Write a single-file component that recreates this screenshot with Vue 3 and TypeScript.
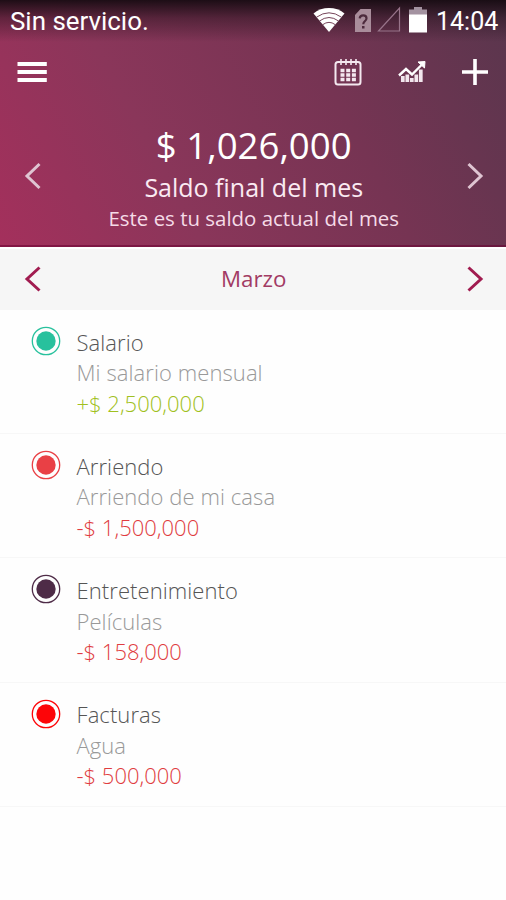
<script setup lang="ts">
interface Entry {
  name: string
  note: string
  amount: string
  income: boolean
  tone: string
}

const entries: Entry[] = [
  { name: 'Salario', note: 'Mi salario mensual', amount: '+$ 2,500,000', income: true, tone: 'teal' },
  { name: 'Arriendo', note: 'Arriendo de mi casa', amount: '-$ 1,500,000', income: false, tone: 'coral' },
  { name: 'Entretenimiento', note: 'Películas', amount: '-$ 158,000', income: false, tone: 'plum' },
  { name: 'Facturas', note: 'Agua', amount: '-$ 500,000', income: false, tone: 'red' },
]
</script>

<template>
  <div class="screen">
    <header class="header">
      <div class="status">
        <span class="carrier">Sin servicio.</span>
        <div class="status-icons">
          <svg class="wifi" width="32" height="26" viewBox="0 0 32 26">
            <path d="M0.5 6.5C9-0.7 23-0.7 31.500 6.500L16 25Z" fill="#fff" />
            <path d="M3.500 10.200Q16 1.400 28.500 10.200M6.500 14Q16 7 25.500 14M9.700 17.700Q16 13 22.300 17.700" fill="none" stroke="#76445a" stroke-width="1" />
          </svg>
          <svg class="sim" width="16" height="24" viewBox="0 0 16 24">
            <path d="M5.500 0H16V23H0V6Z" fill="#a98d9b" />
            <path d="M4.700 9.300Q5 6.300 8.200 6.300Q11.500 6.300 11.500 9.200Q11.500 11 9.700 12.400Q8.300 13.500 8.300 15.200" fill="none" stroke="#4d2b3d" stroke-width="2.200" />
            <rect x="7" y="17" width="2.500" height="2.500" fill="#4d2b3d" />
          </svg>
          <svg class="signal" width="24" height="26" viewBox="0 0 24 26">
            <path d="M22.500 2V25H1.500Z" fill="none" stroke="#98748a" stroke-width="1.200" />
          </svg>
          <svg class="battery" width="18" height="26" viewBox="0 0 18 26">
            <path d="M5 0H13V2.500H18V8H0V2.500H5Z" fill="#a392a0" />
            <path d="M0 7.500H18V25.500H0Z" fill="#fff" />
          </svg>
        </div>
        <span class="clock">14:04</span>
      </div>

      <nav class="toolbar">
        <svg class="menu" width="30" height="22" viewBox="0 0 30 22">
          <path d="M0.500 3H29.800M0.500 11H29.800M0.500 19H29.800" stroke="#fff" stroke-width="3.800" />
        </svg>
        <svg class="calendar" width="28" height="28" viewBox="0 0 28 28">
          <rect x="1.500" y="4" width="25" height="22.500" rx="2.500" fill="none" stroke="#f4e8ef" stroke-width="2" />
          <path d="M7 1V7M12 1V7M17 1V7M22 1V7" stroke="#f4e8ef" stroke-width="1.600" />
          <path d="M6.500 12.500H22M6.500 17H22M6.500 21.500H22" stroke="#f4e8ef" stroke-width="3.300" stroke-dasharray="4 1.700" />
        </svg>
        <svg class="chart" width="28" height="22" viewBox="0 0 28 22">
          <path d="M1 14.500L8 8L14 13.500L23.500 4" fill="none" stroke="#fff" stroke-width="2.400" />
          <path d="M20 1L27 0.500L26.500 7Z" fill="#fff" stroke="#fff" />
          <path d="M4.800 21V15M9.300 21V13.500M13.800 21V17M18.300 21V13.500M22.800 21V8.500" stroke="#f2e6ed" stroke-width="3.700" />
        </svg>
        <svg class="plus" width="26" height="28" viewBox="0 0 26 28">
          <path d="M13 1V27M0 14H26" stroke="#fff" stroke-width="3.600" />
        </svg>
      </nav>

      <section class="summary">
        <svg class="arrow" width="18" height="28" viewBox="0 0 18 28">
          <path d="M15.500 2L3 14L15.500 26" />
        </svg>
        <div class="balance">
          <strong>$ 1,026,000</strong>
          <h1>Saldo final del mes</h1>
          <p>Este es tu saldo actual del mes</p>
        </div>
        <svg class="arrow" width="18" height="28" viewBox="0 0 18 28">
          <path d="M2.500 2L15 14L2.500 26" />
        </svg>
      </section>
    </header>

    <section class="month">
      <svg class="arrow" width="18" height="28" viewBox="0 0 18 28">
        <path d="M15.500 2.500L3 14L15.500 25.500" />
      </svg>
      <h2>Marzo</h2>
      <svg class="arrow" width="18" height="28" viewBox="0 0 18 28">
        <path d="M2.500 2.500L15 14L2.500 25.500" />
      </svg>
    </section>

    <ul class="entries">
      <li v-for="entry in entries" :key="entry.name" class="entry">
        <svg class="marker" :class="entry.tone" width="30" height="30" viewBox="0 0 30 30">
          <circle cx="15" cy="15" r="13.700" fill="none" stroke="currentColor" stroke-width="1.300" />
          <circle cx="15" cy="15" r="9.700" fill="currentColor" />
        </svg>
        <div class="details">
          <span class="name">{{ entry.name }}</span>
          <span class="note">{{ entry.note }}</span>
          <span class="amount" :class="{ income: entry.income }">{{ entry.amount }}</span>
        </div>
      </li>
    </ul>
  </div>
</template>

<style>
body {
  margin: 0;
  background: #fefefe;
}
</style>

<style scoped>
.screen {
  width: 506px;
  height: 900px;
  overflow: hidden;
  background: #fefefe;
  font-family: "Open Sans", "Noto Sans", sans-serif;
}

.header {
  box-sizing: border-box;
  height: 247px;
  border-bottom: 2px solid rgba(105, 0, 50, 0.55);
  background:
    linear-gradient(180deg, rgba(20, 10, 16, 0.92) 0, rgba(20, 10, 16, 0.4) 18px, rgba(20, 10, 16, 0) 42px),
    linear-gradient(62deg, #a4305c 0%, #8a365a 32%, #763453 65%, #59364d 100%);
  background-origin: border-box;
  color: #fff;
}

.status {
  display: flex;
  height: 42px;
  padding: 0 9px 0 10px;
  font-family: Roboto, sans-serif;
}

.carrier,
.clock {
  line-height: 43px;
  white-space: nowrap;
}

.carrier {
  font-size: 25.900px;
}

.clock {
  width: 61px;
  font-size: 25px;
}

.status-icons {
  display: flex;
  margin-left: auto;
  margin-right: 9px;
}

.wifi {
  margin-top: 7px;
}

.sim {
  margin: 9px 0 0 10px;
}

.signal {
  margin: 6px 0 0 6px;
}

.battery {
  margin: 7px 0 0 8px;
}

.toolbar {
  display: flex;
  align-items: center;
  height: 60px;
  padding: 0 18px 0 17px;
}

.calendar {
  margin-left: auto;
}

.chart {
  margin-left: 36px;
}

.plus {
  margin-left: 36px;
}

.summary {
  display: flex;
  justify-content: space-between;
  padding: 18px 22px 0 23.500px;
}

.arrow {
  fill: none;
  stroke-width: 3;
}

.summary .arrow {
  margin-top: 42px;
  stroke: #dfc5d2;
}

.balance {
  display: flex;
  flex-direction: column;
  align-items: center;
  white-space: nowrap;
}

.balance strong {
  font-size: 36.600px;
  font-weight: 400;
  line-height: 50px;
}

.balance h1 {
  margin: 0;
  font-size: 25px;
  font-weight: 400;
  line-height: 34px;
  color: #faeaf2;
}

.balance p {
  margin: 0;
  font-size: 20.450px;
  line-height: 28px;
  color: #f5dbe7;
}

.month {
  box-sizing: border-box;
  display: flex;
  align-items: center;
  justify-content: space-between;
  height: 63px;
  padding: 0 22px 2px 23.500px;
  border-top: 2px solid #fff;
  background: #f6f6f6;
}

.month .arrow {
  stroke: #a11c50;
}

.month h2 {
  margin: 0;
  font-size: 22.300px;
  font-weight: 400;
  line-height: 30px;
  color: #a23b64;
}

.entries {
  margin: 0;
  padding: 0;
  list-style: none;
}

.entry {
  box-sizing: border-box;
  display: flex;
  gap: 15.500px;
  height: 124.200px;
  padding: 16px 31px 0;
  border-bottom: 1px solid #f7f7f7;
}

.marker {
  flex: none;
}

.details {
  display: flex;
  flex-direction: column;
  padding-top: 0.500px;
  font-size: 22px;
  line-height: 30.700px;
  white-space: nowrap;
}

.name,
.note {
  font-weight: 300;
  letter-spacing: 0.080px;
}

.name {
  color: #555;
}

.note {
  color: #999;
}

.amount {
  font-weight: 360;
  color: #e03c40;
}

.amount.income {
  color: #a0c020;
}

.teal {
  color: #28c19d;
}

.coral {
  color: #e94045;
}

.plum {
  color: #4e2b47;
}

.red {
  color: #fd0508;
}
</style>
